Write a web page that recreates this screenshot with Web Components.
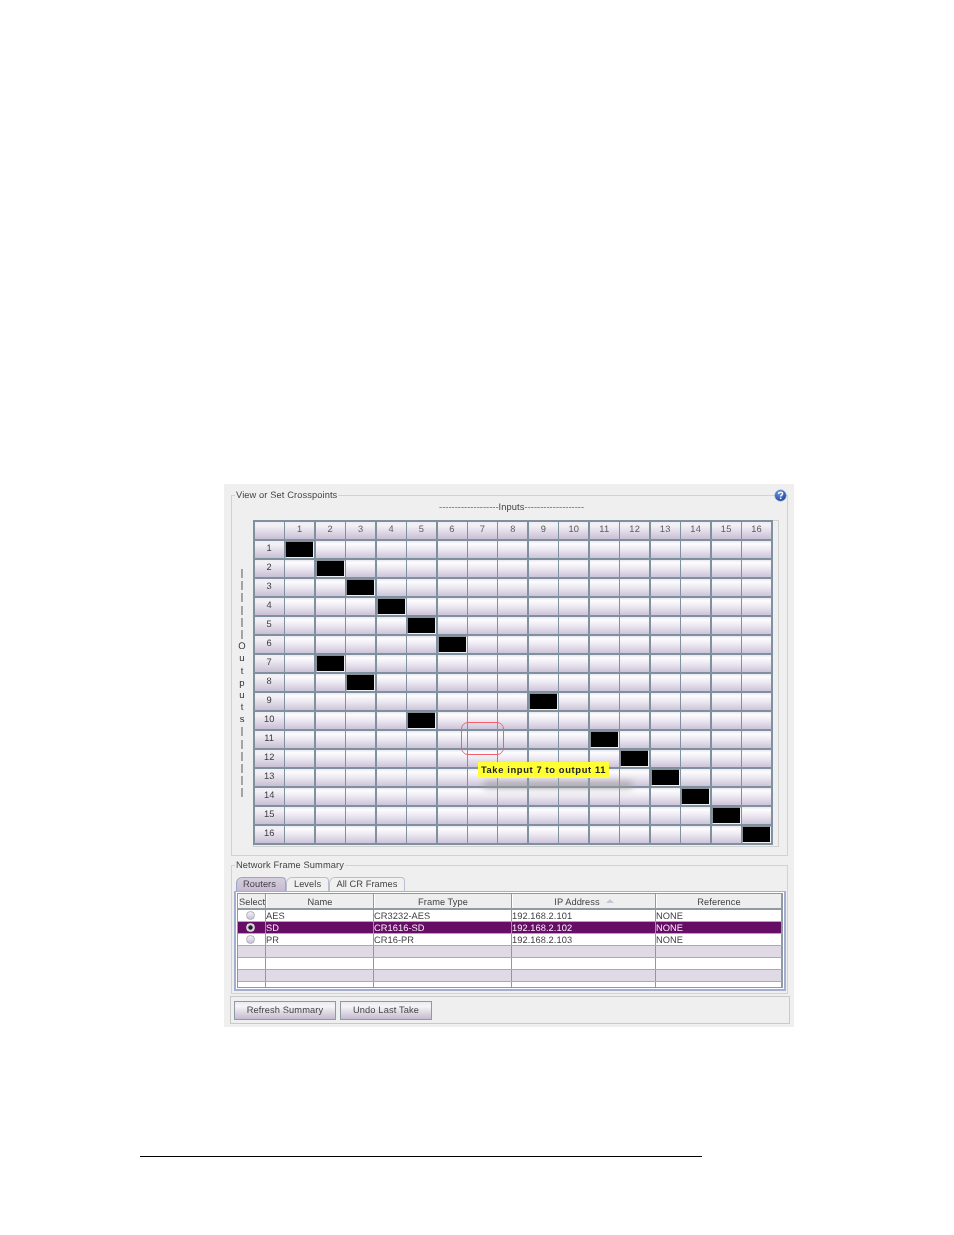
<!DOCTYPE html>
<html>
<head>
<meta charset="utf-8">
<title>View or Set Crosspoints</title>
<style>
  html, body { margin: 0; background: #fff; }
  body { width: 954px; height: 1235px; overflow: hidden; font-family: "Liberation Sans", Arial, sans-serif; text-rendering: geometricPrecision; }
  .page { padding: 484px 0 0 224px; }
  .rule { margin: 129px 0 0 -84px; width: 562px; height: 1px; background: #000; }
</style>
</head>
<body>
<div class="page">
  <router-panel>
    <titled-box slot="top" legend="View or Set Crosspoints" style="height:361px">
      <crosspoint-view></crosspoint-view>
    </titled-box>
    <titled-box slot="middle" legend="Network Frame Summary" style="height:129px">
      <frame-summary></frame-summary>
    </titled-box>
    <button-bar slot="bottom">
      <flat-button style="width:102px">Refresh Summary</flat-button>
      <flat-button style="width:92px">Undo Last Take</flat-button>
    </button-bar>
  </router-panel>
  <div class="rule"></div>
</div>

<script>
// outer grey window, slightly softened because the source is a scaled capture
class RouterPanel extends HTMLElement {
  constructor() {
    super();
    this.attachShadow({ mode: 'open' });
    this.shadowRoot.innerHTML = `
      <style>
        :host { display: block; position: relative; width: 570px; height: 543px; background: #efefef; box-sizing: border-box; padding: 11px 7px 0; filter: blur(.3px); }
        .stack { display: flex; flex-direction: column; }
        .gap1 { height: 9px; }
        .gap2 { height: 2px; }
        svg { position: absolute; left: 549.5px; top: 5px; }
      </style>
      <div class="stack">
        <slot name="top"></slot>
        <div class="gap1"></div>
        <slot name="middle"></slot>
        <div class="gap2"></div>
        <slot name="bottom"></slot>
      </div>
      <svg width="13" height="13" viewBox="0 0 13 13">
        <defs><radialGradient id="b" cx="40%" cy="30%" r="75%"><stop offset="0" stop-color="#6f9ae4"/><stop offset="1" stop-color="#173c98"/></radialGradient></defs>
        <circle cx="6.5" cy="6.5" r="5.8" fill="url(#b)" stroke="#a9bcdc" stroke-width=".7"/>
        <path d="M4.6 5c0-1.3 1-1.9 2-1.9s2 .6 2 1.6c0 1.4-1.9 1.4-1.9 2.9" fill="none" stroke="#fff" stroke-width="1.4"/>
        <rect x="5.9" y="8.6" width="1.5" height="1.5" fill="#fff"/>
      </svg>`;
  }
}

// etched border with the title sitting on the top line
class TitledBox extends HTMLElement {
  constructor() {
    super();
    this.attachShadow({ mode: 'open' });
  }
  connectedCallback() {
    const legend = this.getAttribute('legend') || '';
    this.shadowRoot.innerHTML = `
      <style>
        :host { display: block; position: relative; box-sizing: border-box; border: 1px solid #d2d2d2; width: 557px; }
        .legend { position: absolute; left: 3px; top: -7px; background: #efefef; padding: 0 1px; font: 9.3px/12px "Liberation Sans", Arial, sans-serif; letter-spacing: .1px; color: #444; white-space: nowrap; }
      </style>
      <div class="legend">${legend}</div>
      <slot></slot>`;
  }
}

// 16x16 crosspoint matrix
const TAKES = { 1: 1, 2: 2, 3: 3, 4: 4, 5: 5, 6: 6, 7: 2, 8: 3, 9: 9, 10: 5, 11: 11, 12: 12, 13: 13, 14: 14, 15: 15, 16: 16 };

class CrosspointView extends HTMLElement {
  constructor() {
    super();
    this.attachShadow({ mode: 'open' });
    let cells = '<div class="c head"></div>';
    for (let i = 1; i <= 16; i++) cells += `<div class="c head dim">${i}</div>`;
    for (let r = 1; r <= 16; r++) {
      cells += `<div class="c head">${r}</div>`;
      for (let i = 1; i <= 16; i++) {
        cells += TAKES[r] === i ? '<div class="c on"></div>' : '<div class="c"></div>';
      }
    }
    const side = ['|','|','|','|','|','|','O','u','t','p','u','t','s','|','|','|','|','|','|']
      .map(ch => `<span>${ch}</span>`).join('');
    this.shadowRoot.innerHTML = `
      <style>
        :host { display: block; position: relative; height: 359px; font: 9.3px "Liberation Sans", Arial, sans-serif; color: #444; }
        .inputs { position: absolute; left: 207px; top: 5px; line-height: 12px; white-space: nowrap; letter-spacing: .04px; color: #666; }
        .inputs b { font-weight: normal; letter-spacing: .1px; color: #444; }
        .side { position: absolute; left: 3.5px; top: 72px; width: 13px; display: flex; flex-direction: column; align-items: center; }
        .side span { height: 12.2px; line-height: 12.2px; font-size: 9.5px; color: #333; }
        .frame { position: absolute; left: 21px; top: 24px; width: 526px; height: 327px; box-sizing: border-box; border: 1px solid #d0d0d0; background: #efeff2; }
        .grid { display: grid; width: 519.6px; margin-left: -1px; margin-top: -1px; box-sizing: border-box; padding: 1.5px; background: #7f919f;
          grid-template-columns: 29.3px repeat(16, 1fr); grid-auto-rows: 17.05px; gap: 2px 1.5px; }
        .c { background: linear-gradient(#ebe7f0 0, #fdfcfe 16%, #ece8f1 50%, #cdc4d9 100%); text-align: center; line-height: 15.5px; font-size: 9.3px; color: #3c3c3c; }
        .head { background: linear-gradient(#efedf3 0, #f3f1f6 20%, #ddd7e5 62%, #c9bfd5 100%); }
        .dim { color: #5c5c5c; letter-spacing: .3px; }
        .on { background: #000; border: 1px solid; border-color: #8a9199 #eef0f4 #eef0f4 #8a9199; box-sizing: border-box; }
        .hover { position: absolute; left: 229px; top: 226px; width: 43px; height: 33px; box-sizing: border-box; border: 1px solid #f2606e; border-radius: 7px; }
        .tip { position: absolute; left: 246px; top: 266px; width: 131px; height: 16px; background: #ffff33; color: #222; font: bold 9.4px/16px "Liberation Sans", Arial, sans-serif; letter-spacing: .62px; text-align: center; white-space: nowrap; }
        .blur { position: absolute; left: 252px; top: 285px; width: 148px; height: 8px; background: #999; filter: blur(3px); opacity: .6; }
      </style>
      <div class="inputs">-------------------<b>Inputs</b>-------------------</div>
      <div class="side">${side}</div>
      <div class="frame"><div class="grid">${cells}</div></div>
      <div class="hover"></div>
      <div class="blur"></div>
      <div class="tip">Take input 7 to output 11</div>`;
  }
}

// tabs and router table
class FrameSummary extends HTMLElement {
  constructor() {
    super();
    this.attachShadow({ mode: 'open' });
    const rows = [
      ['AES', 'CR3232-AES', '192.168.2.101', 'NONE'],
      ['SD', 'CR1616-SD', '192.168.2.102', 'NONE', true],
      ['PR', 'CR16-PR', '192.168.2.103', 'NONE'],
      [], [], [], []
    ];
    const body = rows.map((r, i) => {
      const empty = r.length === 0;
      const cls = (r[4] ? 'sel ' : '') + (empty && i % 2 === 1 ? 'alt ' : '') + (empty && i === 6 ? 'short' : '');
      const radio = empty ? '' : `<i class="radio ${r[4] ? 'dot' : ''}"></i>`;
      return `<div class="row ${cls}">
        <div class="td mid">${radio}</div>
        <div class="td">${r[0] || ''}</div>
        <div class="td">${r[1] || ''}</div>
        <div class="td">${r[2] || ''}</div>
        <div class="td">${r[3] || ''}</div>
      </div>`;
    }).join('');
    this.shadowRoot.innerHTML = `
      <style>
        :host { display: block; font: 9.3px "Liberation Sans", Arial, sans-serif; color: #444; letter-spacing: .05px; }
        .tabs { display: flex; padding: 11px 0 0 4px; height: 14px; }
        .tab { height: 14px; box-sizing: border-box; border: 1px solid #b9bfd0; border-bottom: 0; border-radius: 6px 4px 0 0; line-height: 13px; text-align: center; background: #f0f0f0; white-space: nowrap; }
        .tab.on { background: linear-gradient(#d6cede, #c6bad2); border-color: #9aa4cc; padding-right: 3px; box-sizing: border-box; }
        .wrap { margin: 0 1px 0 2px; height: 100px; box-sizing: border-box; border: 1px solid #a4aed0; border-width: 1px 2px 2px 2px; background: #fff; padding: 1px 1px 0; }
        .inner { border: 1px solid #8d99a4; height: 95px; box-sizing: border-box; overflow: hidden; background: #fff; }
        .row { display: grid; grid-template-columns: 28px 108px 138px 144px 1fr; height: 11.05px; border-bottom: 1px solid #a3adb5; }
        .row.th { height: 14px; background: #eeeeee; border-bottom: 2px solid #8f9aa3; }
        .th .td { text-align: center; line-height: 16px; border-right: 1px solid #8f9aa3; border-left: 1px solid #fff; padding: 0; }
        .td { border-right: 1px solid #8d99a4; line-height: 12.5px; padding-left: 0; white-space: nowrap; overflow: hidden; box-sizing: border-box; }
        .mid { display: flex; align-items: center; justify-content: center; padding-right: 3px; padding-bottom: 1px; }
        .alt { background: #e0d9e6; }
        .short { height: 5px; border-bottom: 0; }
        .sel { background: #660e66; color: #f4eef4; }
        .radio { display: block; width: 9px; height: 9px; flex: none; border-radius: 50%; box-sizing: border-box; border: 1px solid #b0afbc; background: linear-gradient(#f5f4f8, #c8c0d2); }
        .dot { background: radial-gradient(circle, #222 0 1.8px, #cfccd6 2.5px); border-color: #e6e4ea; }
        .arrow { display: inline-block; width: 0; height: 0; margin-left: 6px; vertical-align: 2px; border: 4px solid transparent; border-top: 0; border-bottom: 4px solid #c9c4d6; }
      </style>
      <div class="tabs">
        <div class="tab on" style="width:50px">Routers</div>
        <div class="tab" style="width:43px">Levels</div>
        <div class="tab" style="width:76px">All CR Frames</div>
      </div>
      <div class="wrap"><div class="inner">
        <div class="row th">
          <div class="td">Select</div><div class="td">Name</div><div class="td">Frame Type</div>
          <div class="td">IP Address<i class="arrow"></i></div><div class="td">Reference</div>
        </div>
        ${body}
      </div></div>`;
  }
}

class ButtonBar extends HTMLElement {
  constructor() {
    super();
    this.attachShadow({ mode: 'open' });
    this.shadowRoot.innerHTML = `
      <style>
        :host { display: flex; gap: 4px; width: 560px; height: 28px; margin-left: -1px; box-sizing: border-box; border: 1px solid #c9c9c9; padding: 4px 3px; }
      </style>
      <slot></slot>`;
  }
}

class FlatButton extends HTMLElement {
  constructor() {
    super();
    this.attachShadow({ mode: 'open' });
    this.shadowRoot.innerHTML = `
      <style>
        :host { display: block; height: 19px; box-sizing: border-box; border: 1px solid #8d99a4; text-align: center; font: 9.3px/17px "Liberation Sans", Arial, sans-serif; letter-spacing: .12px; color: #444; background: linear-gradient(#ece9f0 0, #f6f5f8 25%, #d8d1df 70%, #c6bbd1 100%); white-space: nowrap; }
      </style>
      <slot></slot>`;
  }
}

customElements.define('router-panel', RouterPanel);
customElements.define('titled-box', TitledBox);
customElements.define('crosspoint-view', CrosspointView);
customElements.define('frame-summary', FrameSummary);
customElements.define('button-bar', ButtonBar);
customElements.define('flat-button', FlatButton);
</script>
</body>
</html>
